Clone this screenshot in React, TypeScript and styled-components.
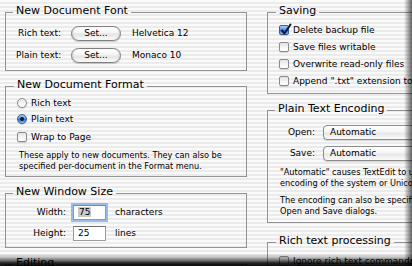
import React from "react";
import styled, { createGlobalStyle } from "styled-components";

const FONT = `"DejaVu Sans", "Liberation Sans", sans-serif`;

const GlobalStyle = createGlobalStyle`
  html, body { margin: 0; padding: 0; background: #ffffff; }
`;

const Window = styled.div`
  position: relative;
  box-sizing: border-box;
  width: 412px;
  height: 266px;
  overflow: hidden;
  padding: 4px 0 0 5px;
  display: flex;
  align-items: flex-start;
  gap: 20px;
  font-family: ${FONT};
  color: #000;
  background: repeating-linear-gradient(to bottom, #fafafa 0px, #fafafa 2px, #ebebeb 2px, #ebebeb 4px);
`;

const Column = styled.div<{ $width: number }>`
  flex: none;
  width: ${(p) => p.$width}px;
  display: flex;
  flex-direction: column;
`;

const Group = styled.fieldset<{ $pt?: number; $pb?: number; $pl?: number; $mt?: number }>`
  margin: ${(p) => p.$mt ?? 0}px 0 0 0;
  padding: ${(p) => p.$pt ?? 0}px 8px ${(p) => p.$pb ?? 5}px ${(p) => p.$pl ?? 10}px;
  border: 1px solid #939393;
  min-width: 0;
  box-sizing: border-box;
`;

const Legend = styled.legend`
  margin-left: -3px;
  padding: 0 3px 4px;
  font-size: 11px;
  line-height: 13px;
  white-space: nowrap;
`;

const Row = styled.div<{ $h: number; $mt?: number }>`
  display: flex;
  align-items: center;
  height: ${(p) => p.$h}px;
  margin-top: ${(p) => p.$mt ?? 0}px;
  font-size: 9px;
  white-space: nowrap;
`;

const RowLabel = styled.span<{ $w: number; $gap: number }>`
  flex: none;
  width: ${(p) => p.$w}px;
  margin-right: ${(p) => p.$gap}px;
  text-align: right;
`;

const TrailingText = styled.span<{ $gap: number }>`
  margin-left: ${(p) => p.$gap}px;
`;

const PushButton = styled.button`
  flex: none;
  box-sizing: border-box;
  width: 50px;
  height: 15px;
  padding: 0 0 1px;
  border: 1px solid #808080;
  border-radius: 8px;
  font: 9px ${FONT};
  color: #000;
  background: linear-gradient(to bottom, #ffffff 0%, #f6f6f6 40%, #e4e4e4 55%, #f3f3f3 85%, #ffffff 100%);
  box-shadow: inset 1px 0 1px rgba(0, 0, 0, 0.12), inset -1px 0 1px rgba(0, 0, 0, 0.12), 0 1px 1px rgba(0, 0, 0, 0.18);
`;

const Box = styled.span<{ $checked?: boolean; $round?: boolean }>`
  flex: none;
  position: relative;
  box-sizing: border-box;
  width: 10px;
  height: 10px;
  margin-right: 4px;
  border-radius: ${(p) => (p.$round ? "50%" : "2px")};
  border: 1px solid ${(p) => (p.$checked ? "#3a5f94" : "#8b8b8b")};
  background: ${(p) =>
    p.$checked
      ? "linear-gradient(to bottom, #a9cdf5 0%, #5a9ae6 45%, #2f6fcf 55%, #8fc3f7 100%)"
      : "linear-gradient(to bottom, #e4e4e4 0%, #f7f7f7 60%, #ffffff 100%)"};
  box-shadow: 0 1px 1px rgba(0, 0, 0, 0.15);
  display: flex;
  align-items: center;
  justify-content: center;
`;

const RadioDot = styled.span`
  width: 4px;
  height: 4px;
  border-radius: 50%;
  background: #101a2a;
`;

const CheckMark = styled.svg`
  position: absolute;
  left: 0px;
  top: -3px;
  overflow: visible;
`;

const TextField = styled.span<{ $focused?: boolean }>`
  flex: none;
  box-sizing: border-box;
  width: 33px;
  height: 15px;
  padding-left: 4px;
  display: flex;
  align-items: center;
  background: #fff;
  border: 1px solid ${(p) => (p.$focused ? "#7b9cc8" : "#9a9a9a")};
  border-top-color: ${(p) => (p.$focused ? "#6a8cbd" : "#6e6e6e")};
  box-shadow: ${(p) => (p.$focused ? "0 0 0 2px rgba(120, 170, 230, 0.75)" : "none")};
  font-size: 9px;
`;

const Selection = styled.span`
  background: #c9c9c9;
  padding: 0 1px;
`;

const PopUp = styled.div`
  flex: none;
  box-sizing: border-box;
  width: 140px;
  height: 15px;
  padding-left: 6px;
  display: flex;
  align-items: center;
  border: 1px solid #8c8c8c;
  border-radius: 4px;
  background: linear-gradient(to bottom, #ffffff 0%, #f5f5f5 45%, #e7e7e7 55%, #fbfbfb 100%);
  box-shadow: 0 1px 1px rgba(0, 0, 0, 0.15);
  font-size: 9px;
`;

const Note = styled.p<{ $mt: number }>`
  margin: ${(p) => p.$mt}px 0 0 2px;
  font-size: 8.2px;
  line-height: 11px;
  white-space: nowrap;
`;

const BottomShade = styled.div`
  position: absolute;
  left: 0;
  right: 0;
  bottom: 0;
  height: 12px;
  background: linear-gradient(to bottom, rgba(0, 0, 0, 0) 0%, rgba(0, 0, 0, 0.35) 40%, rgba(0, 0, 0, 0.85) 75%, rgba(0, 0, 0, 0.95) 100%);
  pointer-events: none;
`;

const RightShade = styled.div`
  position: absolute;
  top: 0;
  bottom: 0;
  right: 0;
  width: 8px;
  background: linear-gradient(to right, rgba(0, 0, 0, 0) 0%, rgba(0, 0, 0, 0.3) 50%, rgba(0, 0, 0, 0.6) 100%);
  pointer-events: none;
`;

function Check({ checked, label }: { checked?: boolean; label: string }) {
  return (
    <>
      <Box $checked={checked}>
        {checked && (
          <CheckMark width="12" height="12" viewBox="0 0 12 12">
            <path d="M2 7.5 L4.5 10.5 L10.5 1.5" fill="none" stroke="#0d1a33" strokeWidth="2" strokeLinecap="round" strokeLinejoin="round" />
          </CheckMark>
        )}
      </Box>
      <span>{label}</span>
    </>
  );
}

function Radio({ checked, label }: { checked?: boolean; label: string }) {
  return (
    <>
      <Box $round $checked={checked}>{checked && <RadioDot />}</Box>
      <span>{label}</span>
    </>
  );
}

export default function App() {
  return (
    <>
      <GlobalStyle />
      <Window>
        <Column $width={242}>
          <Group $pt={2} $pb={5}>
            <Legend>New Document Font</Legend>
            <Row $h={20}>
              <RowLabel $w={45} $gap={10}>Rich text:</RowLabel>
              <PushButton>Set...</PushButton>
              <TrailingText $gap={11}>Helvetica 12</TrailingText>
            </Row>
            <Row $h={20} $mt={2}>
              <RowLabel $w={45} $gap={10}>Plain text:</RowLabel>
              <PushButton>Set...</PushButton>
              <TrailingText $gap={11}>Monaco 10</TrailingText>
            </Row>
          </Group>

          <Group $mt={7} $pt={0} $pb={4} $pl={11}>
            <Legend>New Document Format</Legend>
            <Row $h={16}>
              <Radio label="Rich text" />
            </Row>
            <Row $h={16}>
              <Radio checked label="Plain text" />
            </Row>
            <Row $h={16} $mt={2}>
              <Check label="Wrap to Page" />
            </Row>
            <Note $mt={5}>
              These apply to new documents. They can also be
              <br />
              specified per-document in the Format menu.
            </Note>
          </Group>

          <Group $mt={8} $pt={1} $pb={5}>
            <Legend>New Window Size</Legend>
            <Row $h={18}>
              <RowLabel $w={50} $gap={7}>Width:</RowLabel>
              <TextField $focused>
                <Selection>75</Selection>
              </TextField>
              <TrailingText $gap={9}>characters</TrailingText>
            </Row>
            <Row $h={18} $mt={3}>
              <RowLabel $w={50} $gap={7}>Height:</RowLabel>
              <TextField>25</TextField>
              <TrailingText $gap={9}>lines</TrailingText>
            </Row>
          </Group>

          <Group $mt={8} $pt={2} $pb={5}>
            <Legend>Editing</Legend>
            <Row $h={17}>
              <Check label="Check spelling as you type" />
            </Row>
          </Group>
        </Column>

        <Column $width={280}>
          <Group $pt={0} $pb={4} $pl={11}>
            <Legend>Saving</Legend>
            <Row $h={17}>
              <Check checked label="Delete backup file" />
            </Row>
            <Row $h={17}>
              <Check label="Save files writable" />
            </Row>
            <Row $h={17}>
              <Check label="Overwrite read-only files" />
            </Row>
            <Row $h={17}>
              <Check label='Append ".txt" extension to plain text files' />
            </Row>
          </Group>

          <Group $mt={8} $pt={4} $pb={5}>
            <Legend>Plain Text Encoding</Legend>
            <Row $h={18}>
              <RowLabel $w={37} $gap={8}>Open:</RowLabel>
              <PopUp>Automatic</PopUp>
            </Row>
            <Row $h={18} $mt={3}>
              <RowLabel $w={37} $gap={8}>Save:</RowLabel>
              <PopUp>Automatic</PopUp>
            </Row>
            <Note $mt={5}>
              "Automatic" causes TextEdit to use the default
              <br />
              encoding of the system or Unicode, as appropriate.
            </Note>
            <Note $mt={6}>
              The encoding can also be specified in the
              <br />
              Open and Save dialogs.
            </Note>
          </Group>

          <Group $mt={11} $pt={1} $pb={5} $pl={11}>
            <Legend>Rich text processing</Legend>
            <Row $h={17}>
              <Check label="Ignore rich text commands in HTML files" />
            </Row>
          </Group>
        </Column>

        <BottomShade />
        <RightShade />
      </Window>
    </>
  );
}
